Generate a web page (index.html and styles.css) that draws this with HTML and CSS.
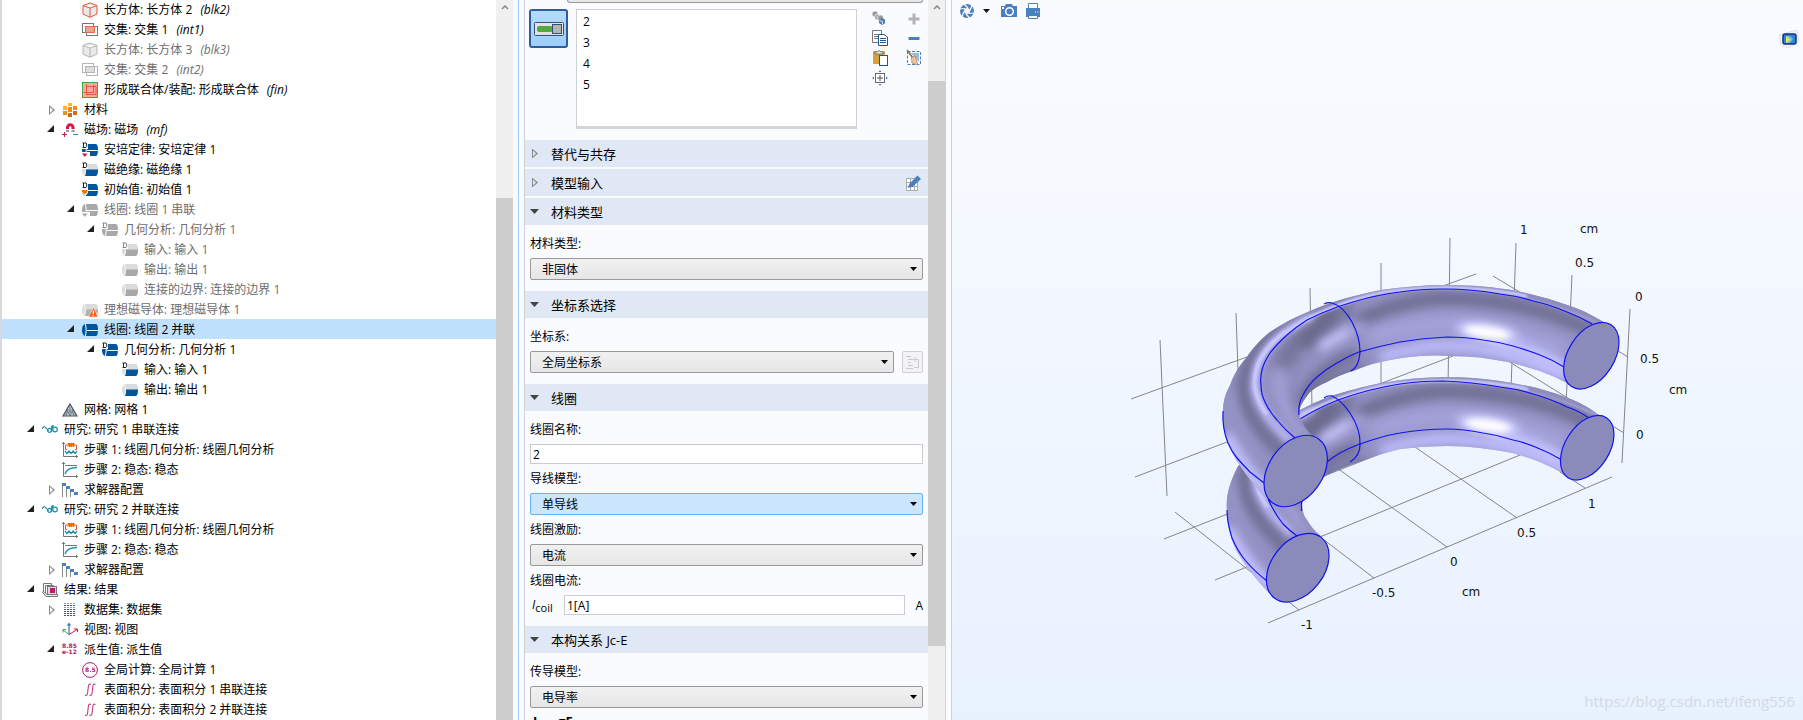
FILE: index.html
```html
<!DOCTYPE html>
<html lang="zh-CN">
<head>
  <meta charset="UTF-8">
  <title>线圈 2 并联</title>
  <link rel="stylesheet" href="styles.css">
</head>
<body>

<!-- icon definitions -->
<svg class="defs" width="0" height="0">
  <symbol id="i-cube" viewBox="0 0 16 16">
    <path d="M8 1L15 3.5V12L8 15.3L1 12V3.5Z M1 3.5L8 6L15 3.5 M8 6V15.3" fill="#e9e9e9" stroke="currentColor"/>
  </symbol>
  <symbol id="i-int" viewBox="0 0 16 16">
    <rect x=".5" y="1.500" width="11" height="9" fill="none" stroke="#777"/>
    <rect x="4.500" y="4.500" width="11" height="9" fill="none" stroke="#777"/>
    <rect x="3.500" y="4.500" width="9" height="6" fill="#f2a08f" stroke="#e2694f"/>
  </symbol>
  <symbol id="i-int-off" viewBox="0 0 16 16">
    <rect x=".5" y="1.500" width="11" height="9" fill="none" stroke="#b5b5b5"/>
    <rect x="4.500" y="4.500" width="11" height="9" fill="none" stroke="#b5b5b5"/>
    <rect x="3.500" y="4.500" width="9" height="6" fill="#ddd" stroke="#b5b5b5"/>
  </symbol>
  <symbol id="i-fin" viewBox="0 0 16 16">
    <rect x=".5" y=".5" width="15" height="15" fill="#f3a999" stroke="#4ba33f"/>
    <path d="M2 10.500H11.500V3 M4.500 2V13 M4.500 4.500H14V12.500H4.500" fill="none" stroke="#e2593f"/>
  </symbol>
  <symbol id="i-mat" viewBox="0 0 16 16">
    <path d="M6 1H10V4H6ZM1 4H5V8H1Z" fill="#ffb52e"/>
    <path d="M6 5H10V10H6ZM11 4H15V8H11ZM1 9H5V13H1Z" fill="#ef8b1d"/>
    <path d="M6 11H10V15H6ZM11 9H15V13H11Z" fill="#cc7016"/>
  </symbol>
  <symbol id="i-mag" viewBox="0 0 16 16">
    <path d="M5.500 7V5.500A2.700 2.700 0 0 1 11 5.500V7" fill="none" stroke="#d5174b" stroke-width="3"/>
    <path d="M4 8H7V10H4ZM9.500 8H12.500V10H9.500Z" fill="#999"/>
    <path d="M0 12.500H5M2.500 10V15" stroke="#d5174b"/>
    <path d="M11 12.500H16" stroke="#4a80bd"/>
  </symbol>
  <symbol id="b-full" viewBox="0 0 16 16">
    <path d="M3 2H14Q16 2.500 16 8T14 14H3Q0 13 0 8T3 2Z" fill="currentColor"/>
    <path d="M3.500 2Q5 8 3.500 14M5 8.500H16" fill="none" stroke="#fff"/>
  </symbol>
  <symbol id="b-half" viewBox="0 0 16 16">
    <path d="M3 2H14Q16 2.500 16 8T14 14H3Q0 13 0 8T3 2Z" fill="#d9dbdc"/>
    <path d="M3 14Q4.500 11 4 7.500H16Q16 13 14 14Z" fill="currentColor"/>
    <path d="M2.500 2.500Q4.500 8 2.500 13.500" fill="none" stroke="#f4f4f4"/>
  </symbol>
  <symbol id="b-d" viewBox="0 0 16 16">
    <path d="M0 0H6V7H0Z" fill="#fff"/>
    <path d="M1.500 1V5.500M.5 1H4L4.700 2V4.700L4 5.500H.5" fill="none" stroke="currentColor"/>
  </symbol>
  <symbol id="b-tri" viewBox="0 0 16 16">
    <path d="M0 10H8V16H0Z" fill="#fff"/>
    <path d="M0 11.500H5.500L2.800 15Z" fill="currentColor"/>
  </symbol>
  <symbol id="i-ampere" viewBox="0 0 16 16">
    <use href="#b-full" color="#00559b"/><use href="#b-d" color="#222"/><use href="#b-tri" color="#d0116b"/>
  </symbol>
  <symbol id="i-insul" viewBox="0 0 16 16">
    <use href="#b-half" color="#00559b"/><use href="#b-d" color="#222"/>
  </symbol>
  <symbol id="i-init" viewBox="0 0 16 16">
    <use href="#b-full" color="#00559b"/><use href="#b-d" color="#222"/>
    <path d="M0 7H6V11L3 14L0 11Z" fill="#fff"/><path d="M0 8H5.500V10L2.800 12.500L0 10Z" fill="#e37a10"/>
  </symbol>
  <symbol id="i-coil-off" viewBox="0 0 16 16">
    <use href="#b-full" color="#a8a8a8"/><use href="#b-tri" color="#a8a8a8"/>
  </symbol>
  <symbol id="i-geom-off" viewBox="0 0 16 16">
    <use href="#b-full" color="#a8a8a8"/><use href="#b-d" color="#888"/>
  </symbol>
  <symbol id="i-in-off" viewBox="0 0 16 16">
    <use href="#b-half" color="#a8a8a8"/><use href="#b-d" color="#888"/>
  </symbol>
  <symbol id="i-out-off" viewBox="0 0 16 16"><use href="#b-half" color="#a8a8a8"/></symbol>
  <symbol id="i-warn" viewBox="0 0 16 16">
    <use href="#b-half" color="#b0b0b0"/>
    <path d="M11.500 5L16 15H6.500Z" fill="#ff5a0a" stroke="#fff" stroke-width=".6"/>
    <path d="M11.300 8.500V12M11.300 12.800V14" stroke="#fff" stroke-width="1.300"/>
  </symbol>
  <symbol id="i-coil" viewBox="0 0 16 16"><use href="#b-full" color="#00559b"/></symbol>
  <symbol id="i-geom" viewBox="0 0 16 16">
    <use href="#b-full" color="#00559b"/><use href="#b-d" color="#222"/>
  </symbol>
  <symbol id="i-out" viewBox="0 0 16 16"><use href="#b-half" color="#00559b"/></symbol>
  <symbol id="i-mesh" viewBox="0 0 16 16">
    <path d="M8 2L15 14H1Z" fill="#c9d1d8" stroke="#44525f" stroke-width="1.200"/>
    <path d="M5 8H11L8 14ZM8 2V8M1 14L8 9L15 14M8 9V14M5 8L4.500 14M11 8L11.500 14" fill="none" stroke="#5a6875" stroke-width=".7"/>
  </symbol>
  <symbol id="i-study" viewBox="0 0 16 16">
    <path d="M0 7Q2 3 4 6T7 8M9.500 4V10M11 6V3" fill="none" stroke="#1c93a8" stroke-width="1.200"/>
    <circle cx="7.500" cy="8.300" r="2" fill="none" stroke="#1c93a8" stroke-width="1.200"/>
    <circle cx="13" cy="7.500" r="2.300" fill="none" stroke="#1c93a8" stroke-width="1.200"/>
    <path d="M10 3Q12 4 10.500 8" fill="none" stroke="#1c93a8"/>
  </symbol>
  <symbol id="i-step-coil" viewBox="0 0 16 16">
    <path d="M1.500 0V14.500H16M0 1.500H3M14.500 13V16" fill="none" stroke="#777"/>
    <path d="M5.500 1H12.500V4.500H5.500Z" fill="#ef7d1a"/>
    <path d="M5.500 3H3.500V7.500H5M12.500 3H14.500V7.500H13M7.500 1V5M9.500 1V5M11.500 1V5" fill="none" stroke="#e2552b"/>
    <path d="M3 9L5 11.500L7 9L9 11.500L11 9L13 11.500L15 9" fill="none" stroke="#1c93a8" stroke-width="1.300"/>
  </symbol>
  <symbol id="i-step" viewBox="0 0 16 16">
    <path d="M1.500 0V14.500H16M0 1.500H3M14.500 13V16M3 3.500H15" fill="none" stroke="#777"/>
    <path d="M3 12Q5 5.500 15 5.500" fill="none" stroke="#2496b5" stroke-width="1.300"/>
  </symbol>
  <symbol id="i-solver" viewBox="0 0 16 16">
    <path d="M.5 1V15M4.500 4V15M8.500 7V15" stroke="#888"/>
    <path d="M0 1H4V4H0ZM4 4H8V7H4ZM8 7H12V10H8ZM12 10H16V13H12Z" fill="#4a80bd"/>
  </symbol>
  <symbol id="i-results" viewBox="0 0 16 16">
    <path d="M1.500 11V1.500H9.500V3M3.500 11V3.500H11.500V5" fill="#fff" stroke="#777"/>
    <rect x="5.500" y="4.500" width="9" height="8" fill="#ddd" stroke="#777"/>
    <rect x="8" y="6" width="5" height="5" fill="#c2186b"/>
    <path d="M0 9.500L4 14.500H15.500V12.500H5L1 9" fill="#eee" stroke="#777"/>
  </symbol>
  <symbol id="i-data" viewBox="0 0 16 16">
    <path d="M2 1.500H14M2 5.500H14" stroke="#999" stroke-dasharray="2 1" />
    <path d="M2 3.500H14M2 7.500H14M2 9.500H14M2 11.500H14M2 13.500H14" stroke="#c2186b" stroke-dasharray="2 1"/>
  </symbol>
  <symbol id="i-view" viewBox="0 0 16 16">
    <path d="M7 12.500V2M5.500 3.500L7 1.500L8.500 3.500" fill="none" stroke="#4a80bd" stroke-width="1.300"/>
    <path d="M7 12.500L1 8M1 10.500V7.500H4" fill="none" stroke="#4ba33f"/>
    <path d="M7 12.500L15 7.500M12 7H15.500V10" fill="none" stroke="#d5174b"/>
  </symbol>
  <symbol id="i-derived" viewBox="0 0 16 16">
    <text x="0" y="6" class="icon-num">8.85</text>
    <text x="0" y="12" class="icon-num">e-12</text>
  </symbol>
  <symbol id="i-global" viewBox="0 0 16 16">
    <circle cx="8" cy="8" r="7.400" fill="#fff" stroke="#b5176b"/>
    <text x="3" y="10" class="icon-num">8.5</text>
  </symbol>
  <symbol id="i-surf" viewBox="0 0 16 16">
    <path d="M3 13Q5.500 14.500 5.700 10L6.300 5Q6.500 1 9 2.500M7.500 13Q10 14.500 10.200 10L10.800 5Q11 1 13.500 2.500" fill="none" stroke="#c2387c" stroke-width="1.100"/>
  </symbol>
</svg>

<div class="app">

  <!-- model tree -->
  <div class="tree-pane">
    <ul class="tree">
      <li class="row d2"><span class="arrow"></span><svg class="ico red"><use href="#i-cube"/></svg><span>长方体: 长方体 2 <i>(blk2)</i></span></li>
      <li class="row d2"><span class="arrow"></span><svg class="ico"><use href="#i-int"/></svg><span>交集: 交集 1 <i>(int1)</i></span></li>
      <li class="row d2 off"><span class="arrow"></span><svg class="ico gray"><use href="#i-cube"/></svg><span>长方体: 长方体 3 <i>(blk3)</i></span></li>
      <li class="row d2 off"><span class="arrow"></span><svg class="ico"><use href="#i-int-off"/></svg><span>交集: 交集 2 <i>(int2)</i></span></li>
      <li class="row d2"><span class="arrow"></span><svg class="ico"><use href="#i-fin"/></svg><span>形成联合体/装配: 形成联合体 <i>(fin)</i></span></li>
      <li class="row d1"><span class="arrow closed"></span><svg class="ico"><use href="#i-mat"/></svg><span>材料</span></li>
      <li class="row d1"><span class="arrow open"></span><svg class="ico"><use href="#i-mag"/></svg><span>磁场: 磁场 <i>(mf)</i></span></li>
      <li class="row d2"><span class="arrow"></span><svg class="ico"><use href="#i-ampere"/></svg><span>安培定律: 安培定律 1</span></li>
      <li class="row d2"><span class="arrow"></span><svg class="ico"><use href="#i-insul"/></svg><span>磁绝缘: 磁绝缘 1</span></li>
      <li class="row d2"><span class="arrow"></span><svg class="ico"><use href="#i-init"/></svg><span>初始值: 初始值 1</span></li>
      <li class="row d2 off"><span class="arrow open"></span><svg class="ico"><use href="#i-coil-off"/></svg><span>线圈: 线圈 1 串联</span></li>
      <li class="row d3 off"><span class="arrow open"></span><svg class="ico"><use href="#i-geom-off"/></svg><span>几何分析: 几何分析 1</span></li>
      <li class="row d4 off"><span class="arrow"></span><svg class="ico"><use href="#i-in-off"/></svg><span>输入: 输入 1</span></li>
      <li class="row d4 off"><span class="arrow"></span><svg class="ico"><use href="#i-out-off"/></svg><span>输出: 输出 1</span></li>
      <li class="row d4 off"><span class="arrow"></span><svg class="ico"><use href="#i-out-off"/></svg><span>连接的边界: 连接的边界 1</span></li>
      <li class="row d2 off"><span class="arrow"></span><svg class="ico"><use href="#i-warn"/></svg><span>理想磁导体: 理想磁导体 1</span></li>
      <li class="row d2 selected"><span class="arrow open"></span><svg class="ico"><use href="#i-coil"/></svg><span>线圈: 线圈 2 并联</span></li>
      <li class="row d3"><span class="arrow open"></span><svg class="ico"><use href="#i-geom"/></svg><span>几何分析: 几何分析 1</span></li>
      <li class="row d4"><span class="arrow"></span><svg class="ico"><use href="#i-insul"/></svg><span>输入: 输入 1</span></li>
      <li class="row d4"><span class="arrow"></span><svg class="ico"><use href="#i-out"/></svg><span>输出: 输出 1</span></li>
      <li class="row d1"><span class="arrow"></span><svg class="ico"><use href="#i-mesh"/></svg><span>网格: 网格 1</span></li>
      <li class="row d0"><span class="arrow open"></span><svg class="ico"><use href="#i-study"/></svg><span>研究: 研究 1 串联连接</span></li>
      <li class="row d1"><span class="arrow"></span><svg class="ico"><use href="#i-step-coil"/></svg><span>步骤 1: 线圈几何分析: 线圈几何分析</span></li>
      <li class="row d1"><span class="arrow"></span><svg class="ico"><use href="#i-step"/></svg><span>步骤 2: 稳态: 稳态</span></li>
      <li class="row d1"><span class="arrow closed"></span><svg class="ico"><use href="#i-solver"/></svg><span>求解器配置</span></li>
      <li class="row d0"><span class="arrow open"></span><svg class="ico"><use href="#i-study"/></svg><span>研究: 研究 2 并联连接</span></li>
      <li class="row d1"><span class="arrow"></span><svg class="ico"><use href="#i-step-coil"/></svg><span>步骤 1: 线圈几何分析: 线圈几何分析</span></li>
      <li class="row d1"><span class="arrow"></span><svg class="ico"><use href="#i-step"/></svg><span>步骤 2: 稳态: 稳态</span></li>
      <li class="row d1"><span class="arrow closed"></span><svg class="ico"><use href="#i-solver"/></svg><span>求解器配置</span></li>
      <li class="row d0"><span class="arrow open"></span><svg class="ico"><use href="#i-results"/></svg><span>结果: 结果</span></li>
      <li class="row d1"><span class="arrow closed"></span><svg class="ico"><use href="#i-data"/></svg><span>数据集: 数据集</span></li>
      <li class="row d1"><span class="arrow"></span><svg class="ico"><use href="#i-view"/></svg><span>视图: 视图</span></li>
      <li class="row d1"><span class="arrow open"></span><svg class="ico"><use href="#i-derived"/></svg><span>派生值: 派生值</span></li>
      <li class="row d2"><span class="arrow"></span><svg class="ico"><use href="#i-global"/></svg><span>全局计算: 全局计算 1</span></li>
      <li class="row d2"><span class="arrow"></span><svg class="ico"><use href="#i-surf"/></svg><span>表面积分: 表面积分 1 串联连接</span></li>
      <li class="row d2"><span class="arrow"></span><svg class="ico"><use href="#i-surf"/></svg><span>表面积分: 表面积分 2 并联连接</span></li>
    </ul>
    <div class="scrollbar">
      <svg class="chevron" viewBox="0 0 8 5"><path d="M1 4L4 1L7 4" fill="none" stroke="#888" stroke-width="1.500"/></svg>
      <div class="thumb tree-thumb"></div>
    </div>
  </div>

  <!-- settings -->
  <div class="settings-pane">
    <div class="settings">
      <div class="cut-field"></div>
      <div class="selection">
        <button class="toggle" type="button" aria-label="激活选择">
          <svg width="30" height="14" viewBox="0 0 30 14">
            <rect x=".5" y=".5" width="29" height="13" rx="1" fill="#e3e3e3" stroke="#34507c"/>
            <rect x="3" y="4" width="16" height="6" rx="2" fill="#52a843"/>
            <rect x="18.500" y="2.500" width="9" height="9" fill="#b4b4b4" stroke="#34507c"/>
          </svg>
        </button>
        <ul class="domain-list">
          <li>2</li>
          <li>3</li>
          <li>4</li>
          <li>5</li>
        </ul>
        <div class="tools">
          <button type="button" aria-label="创建选择"><svg viewBox="0 0 18 18">
            <g stroke="#fff" stroke-width=".6"><circle cx="4" cy="5" r="3" fill="#999"/><circle cx="6.500" cy="8" r="3" fill="#aaa"/><circle cx="9.500" cy="9" r="3" fill="#999"/></g>
            <path d="M8 11L11 9L14 10.500V14.500L11 16L8 14Z" fill="#4a80bd"/><path d="M8.500 11.500L11.500 12.500V15" fill="none" stroke="#cfe2f5"/></svg></button>
          <button type="button" aria-label="添加"><svg viewBox="0 0 18 18"><path d="M3.500 10H14.500M9 4.500V15.500" stroke="#b3b3b3" stroke-width="3"/></svg></button>
          <button type="button" aria-label="复制"><svg viewBox="0 0 18 18">
            <path d="M1.500 1.500H10.500V13.500H1.500Z" fill="#fff" stroke="#777"/><path d="M3 5.500H7M3 7.500H7M3 9.500H7" stroke="#777"/>
            <path d="M7.500 5.500H13L16.500 8V16.500H7.500Z" fill="#fff" stroke="#27548a"/><path d="M9 9.500H15M9 11.500H15M9 13.500H15" stroke="#27548a"/></svg></button>
          <button type="button" aria-label="移除"><svg viewBox="0 0 18 18"><path d="M3.500 9.500H14.500" stroke="#4a80bd" stroke-width="3"/></svg></button>
          <button type="button" aria-label="粘贴"><svg viewBox="0 0 18 18">
            <rect x="2" y="2" width="12" height="13" rx="1" fill="#d4a13b"/><path d="M4 3H6Q8 0 10 3H12V5H4Z" fill="#eee" stroke="#777"/>
            <rect x="8.500" y="6.500" width="8" height="10" fill="#fff" stroke="#27548a"/></svg></button>
          <button type="button" aria-label="清除选择"><svg viewBox="0 0 18 18">
            <rect x="2.500" y="2.500" width="13" height="13" fill="none" stroke="#4a80bd" stroke-dasharray="3 1.500"/><path d="M6 4H14V13Z" fill="#9dbcdc"/>
            <path d="M2 1L8 9" stroke="#8a6a4c" stroke-width="1.500"/><path d="M6.500 8.500L10 7L13 16L7 14Z" fill="#ecc7a5" stroke="#a97c55" stroke-width=".7"/></svg></button>
          <button type="button" aria-label="缩放到选择"><svg viewBox="0 0 18 18">
            <rect x="4.500" y="4.500" width="9" height="9" fill="#fff" stroke="#666"/><path d="M6 9H12M9 6V12" stroke="#555"/>
            <path d="M7.500 3H10.500L9 1ZM7.500 15H10.500L9 17ZM3 7.500V10.500L1 9ZM15 7.500V10.500L17 9Z" fill="#4a80bd"/></svg></button>
        </div>
      </div>

      <h3 class="section-head"><span class="caret right"></span>替代与共存</h3>
      <h3 class="section-head"><span class="caret right"></span>模型输入
        <svg class="edit-ico" viewBox="0 0 18 18">
          <path d="M2.500 4.500H13.500V16.500H2.500ZM2.500 8.500H13.500M2.500 12.500H13.500M6.500 4.500V16.500M10.500 4.500V16.500" fill="#fff" stroke="#aaa"/>
          <path d="M4 14L5.500 9.500L13.500 1.500L17 5L9 12.500Z" fill="#4a80bd"/></svg>
      </h3>
      <h3 class="section-head"><span class="caret down"></span>材料类型</h3>
      <div class="section-body">
        <label for="matType">材料类型:</label>
        <div class="combo"><select id="matType"><option>非固体</option></select></div>
      </div>

      <h3 class="section-head"><span class="caret down"></span>坐标系选择</h3>
      <div class="section-body">
        <label for="coord">坐标系:</label>
        <div class="line">
          <div class="combo"><select id="coord"><option>全局坐标系</option></select></div>
          <button class="goto" type="button" disabled aria-label="转到源">
            <svg width="15" height="15" viewBox="0 0 15 15"><path d="M1 1.500H6M3 4.500H8M3 7.500H6M3 10.500H8M1 13.500H8M9 4.500H13.500V12.500H9M11 2L8.500 4.500L11 7" fill="none" stroke="#c9c9cb"/></svg>
          </button>
        </div>
      </div>

      <h3 class="section-head"><span class="caret down"></span>线圈</h3>
      <div class="section-body">
        <label for="coilName">线圈名称:</label>
        <input id="coilName" type="text" value="2">
        <label for="wire">导线模型:</label>
        <div class="combo active"><select id="wire"><option>单导线</option></select></div>
        <label for="excite">线圈激励:</label>
        <div class="combo"><select id="excite"><option>电流</option></select></div>
        <label for="current">线圈电流:</label>
        <div class="line current-line">
          <span class="symbol"><i>I</i><sub>coil</sub></span>
          <input id="current" type="text" value="1[A]">
          <span class="unit">A</span>
        </div>
      </div>

      <h3 class="section-head"><span class="caret down"></span>本构关系 Jc-E</h3>
      <div class="section-body">
        <label for="cond">传导模型:</label>
        <div class="combo"><select id="cond"><option>电导率</option></select></div>
        <div class="equation">J<sub>c</sub> = σE</div>
      </div>
    </div>
    <div class="scrollbar settings-bar">
      <svg class="chevron" viewBox="0 0 8 5"><path d="M1 4L4 1L7 4" fill="none" stroke="#888" stroke-width="1.500"/></svg>
      <div class="thumb settings-thumb"></div>
    </div>
  </div>

  <!-- graphics window -->
  <div class="graphics">
    <div class="toolbar">
      <button type="button" aria-label="场景光"><svg width="16" height="16" viewBox="0 0 16 16">
        <circle cx="8" cy="8" r="5" fill="none" stroke="#4a80bd" stroke-width="4"/>
        <path d="M5 1L9 5M13 2.500L11 7.500M15.500 10L10 10.500M11 15.500L7 11M3 13.500L5 8.500M.5 6L6 5.500" stroke="#fafbff" stroke-width="1.200"/></svg></button>
      <button class="more" type="button" aria-label="更多"><span class="drop"></span></button>
      <button type="button" aria-label="快照"><svg width="16" height="16" viewBox="0 0 16 16">
        <path d="M0 3H4L5 1H11L12 3H16V14H0Z" fill="#4a80bd"/><circle cx="8.500" cy="8.500" r="3.800" fill="#4a80bd" stroke="#fff" stroke-width="1.500"/><path d="M1 4H3V6H1Z" fill="#fff"/></svg></button>
      <button type="button" aria-label="打印"><svg width="16" height="16" viewBox="0 0 16 16">
        <path d="M3.500 6V.5H12.500V6" fill="#fff" stroke="#4a80bd"/><path d="M1 5H15V14H1Z" fill="#4a80bd"/><path d="M3.500 12.500H12.500V15.500H3.500Z" fill="#fff" stroke="#4a80bd"/><path d="M10 9H11M12.500 9H13.500" stroke="#fff"/></svg></button>
    </div>
    <svg class="logo" viewBox="0 0 22 20">
      <path d="M1 6L19 1L21 13L10 19L3 16Z" fill="#f4f3f1" stroke="#e2e2e2"/>
      <rect x="5" y="5" width="13" height="10" rx="2" fill="#2f86d6" stroke="#10328f" stroke-width="1.500"/>
      <path d="M8 7H12L15 10L12 14H8Z" fill="#6fc3d8"/>
      <path d="M8 7.500L12.500 10.500L8 14Z" fill="#ffe24a"/>
    </svg>

    <svg class="scene" viewBox="952 20 851 700" preserveAspectRatio="xMidYMid meet">
      <defs>
        <filter id="b1" filterUnits="userSpaceOnUse" x="1180" y="240" width="480" height="420"><feGaussianBlur stdDeviation="1.200"/></filter>
        <filter id="b3" filterUnits="userSpaceOnUse" x="1180" y="240" width="480" height="420"><feGaussianBlur stdDeviation="3"/></filter>
        <filter id="b5" filterUnits="userSpaceOnUse" x="1180" y="240" width="480" height="420"><feGaussianBlur stdDeviation="5"/></filter>
        <filter id="b7" filterUnits="userSpaceOnUse" x="1180" y="240" width="480" height="420"><feGaussianBlur stdDeviation="7"/></filter>
        <clipPath id="topRing">
          <path d="M1605 323C1590 314 1580 309 1570 306Q1545 297 1517 291C1495 287 1470 285 1447 285C1424 285 1402 287 1381 290C1355 295 1330 302 1310 311C1295 317 1282 324 1270 332C1259 341 1252 349 1247 357C1237 368 1233 377 1230 385C1224 396 1223 404 1223 413V421C1224 429 1226 436 1228 444C1236 463 1251 482 1268 500L1296 472L1320 441Q1312 437 1307 430Q1301 423 1299 414C1299 407 1304 399 1310 392Q1317 386 1327 382Q1339 375 1353 371C1363 367 1371 364 1381 362C1393 359 1407 357 1420 356Q1436 355 1450 356Q1465 356 1480 357.500Q1497 360 1513 363Q1527 367 1540 371Q1554 376 1567 383L1592 356Z"/>
        </clipPath>
        <clipPath id="bottomRing">
          <path d="M1600 416C1590 408 1582 404 1573 400Q1556 393 1537 388Q1519 384 1500 381Q1473 377 1447 377Q1414 377 1381 383C1362 387 1347 391 1331 396Q1315 402 1300 410L1238 466Q1231 479 1228 492Q1226 501 1227 511Q1227 523 1230 533Q1232 541 1235 548C1243 563 1255 578 1269 593L1298 568L1321 536Q1312 529 1307 520Q1302 514 1302 504Q1308 486 1327 475Q1339 469 1350 465L1367 459Q1384 453 1400 449Q1424 446 1447 446Q1464 446 1480 448Q1497 450 1513 453Q1527 457 1540 462Q1552 467 1564 474L1587 448Z"/>
        </clipPath>
        <!-- light and dark streaks of a ring surface -->
        <g id="shade" fill="none" stroke-linecap="round">
          <path d="M1200 260H1640V640H1200Z" fill="#9391c3"/>
          <path d="M1375 336Q1410 324 1450 324T1560 348" stroke="#a5a3dc" stroke-width="18" filter="url(#b7)"/>
          <path d="M1364 318Q1400 301 1443 298Q1495 299 1533 309T1596 334" stroke="#716f94" stroke-width="14" filter="url(#b5)"/>
          <path d="M1345 310Q1300 328 1284 362" stroke="#75739a" stroke-width="20" filter="url(#b7)"/>
          <path d="M1330 316L1306 340" stroke="#6c6a8e" stroke-width="16" filter="url(#b5)"/>
          <path d="M1352 356Q1318 370 1300 400" stroke="#747299" stroke-width="14" filter="url(#b5)"/>
          <path d="M1323 346L1348 331" stroke="#cbc9ff" stroke-width="8" filter="url(#b5)"/>
          <path d="M1365 325L1350 331" stroke="#a5a3d8" stroke-width="6" filter="url(#b5)"/>
          <path d="M1385 357Q1420 345 1450 346Q1505 348 1566 376" stroke="#bbb9fa" stroke-width="13" filter="url(#b5)"/>
          <path d="M1495 341Q1530 349 1560 366" stroke="#c5c3ff" stroke-width="14" filter="url(#b5)"/>
          <path d="M1310 394Q1350 368 1450 358Q1510 360 1567 385" stroke="#8b89b8" stroke-width="3" filter="url(#b1)"/>
          <path d="M1300 402Q1318 384 1362 370" stroke="#706e95" stroke-width="10" filter="url(#b5)"/>
          <ellipse cx="1487" cy="332" rx="32" ry="9" transform="rotate(8 1487 332)" fill="#cfceff" filter="url(#b5)"/>
          <ellipse cx="1487" cy="332.500" rx="23" ry="6" transform="rotate(8 1487 332.500)" fill="#fff" filter="url(#b3)"/>
          <path d="M1280 375Q1276 400 1302 432" stroke="#a09ed3" stroke-width="12" filter="url(#b5)"/>
          <path d="M1300 372Q1286 398 1310 432" stroke="#8c8abb" stroke-width="7" filter="url(#b5)"/>
          <path d="M1290 319Q1238 356 1244 398Q1252 425 1280 450L1292 470" stroke="#716f96" stroke-width="14" filter="url(#b5)"/>
          <path d="M1229 398Q1226 425 1252 458" stroke="#9593c6" stroke-width="12" filter="url(#b5)"/>
          <path d="M1228 440Q1246 474 1272 496" stroke="#c3c1ff" stroke-width="13" filter="url(#b5)"/>
          <path d="M1310 317C1262 341 1254 366 1255 387C1258 407 1271 422 1288 438" stroke="#b9b7f2" stroke-width="8" filter="url(#b3)"/>
          <path d="M1285 332C1260 351 1253 370 1255 388C1257 398 1261 406 1266 413" stroke="#cbc9ff" stroke-width="4" filter="url(#b1)"/>
          <path d="M1285 333Q1320 307 1381 292.500Q1414 287 1447 287Q1482 288 1517 294Q1560 303 1600 322" stroke="#c9c7fa" stroke-width="4" filter="url(#b1)"/>
          <path d="M1270 331Q1320 303 1381 289.500Q1414 284.500 1447 284.500Q1482 285 1517 290.500Q1560 300 1605 322" stroke="#8c8ab8" stroke-width="2" filter="url(#b1)"/>
          <path d="M1530 296Q1570 306 1603 322" stroke="#8e8cbd" stroke-width="6" filter="url(#b1)"/>
        </g>
      </defs>

      <g class="grid-lines">
        <path d="M1160 340L1167 496M1236 313L1239 400M1310 288L1312 410M1381 263V390M1450 238L1448 390M1516 243L1511 390M1572 275L1566 405M1630 309L1622 463"/>
        <path d="M1131 399L1476 274M1493 276L1628 357M1135 477L1453 356M1500 356L1624 433M1164 539L1390 450"/>
        <path d="M1175 512L1299 610M1215 580L1520 455M1268 623L1612 477M1374 578L1315 533M1447 547L1330 463M1517 518L1405 440M1585 488L1560 472"/>
      </g>

      <g clip-path="url(#bottomRing)"><use href="#shade" transform="translate(1 93)"/></g>
      <g class="edges">
        <path d="M1589 418C1580 412 1574 409 1567 407Q1551 399 1533 394Q1517 389 1500 387Q1472 382 1443 381Q1420 381 1400 384Q1368 389 1338 400Q1318 408 1300 419"/>
        <path d="M1266 493Q1268 500 1272 507Q1276 515 1283 524Q1289 530 1297 536"/>
        <path d="M1560 459Q1550 453 1540 449Q1527 443 1513 440Q1498 435 1483 433Q1463 429 1447 429Q1424 429 1400 433Q1386 435 1372 440L1360 444Q1349 448 1340 453Q1333 457 1327 462M1301.500 502V511"/>
        <path d="M1227 510Q1227 522 1232 538Q1237 550 1245 560Q1254 571 1267 581"/>
        <path d="M1324 398Q1328 395 1332 396Q1341 400 1350 413Q1361 430 1360 445Q1360 456 1350 462"/>
      </g>
      <g clip-path="url(#topRing)"><use href="#shade"/></g>
      <g class="edges">
        <path d="M1592 324Q1580 317 1567 312Q1551 305 1533 301Q1517 296 1500 294Q1472 289 1443 289Q1420 289 1400 292Q1376 295 1353 302L1337 307Q1321 313 1307 320Q1296 327 1287 335Q1276 345 1270 353Q1264 362 1262 370Q1260 378 1261 385Q1261 394 1265 402Q1269 411 1277 420Q1285 430 1295 438"/>
        <path d="M1564 367Q1553 360 1540 355Q1527 350 1513 346Q1499 342 1483 340Q1466 337 1447 337Q1423 338 1400 342Q1380 346 1359 352Q1348 356 1337 363Q1326 369 1317 377Q1308 385 1303 395Q1298 403 1299 415"/>
        <path d="M1223 411Q1222 428 1228 443Q1232 452 1237 458Q1244 466 1250 472L1264 483"/>
        <path d="M1324 304Q1328 302 1332 303Q1343 306 1352 322Q1360 337 1360 352Q1359 367 1351 371"/>
        <ellipse class="cap" cx="1297.700" cy="567.700" rx="38.300" ry="26.200" transform="rotate(-52.300 1297.700 567.700)"/>
        <ellipse class="cap" cx="1295.700" cy="471" rx="39.400" ry="26.900" transform="rotate(-54.400 1295.700 471)"/>
        <ellipse class="cap" cx="1587.200" cy="447.700" rx="35.600" ry="22.100" transform="rotate(-57.300 1587.200 447.700)"/>
        <ellipse class="cap" cx="1591.300" cy="355.700" rx="36.700" ry="23" transform="rotate(-57.400 1591.300 355.700)"/>
      </g>

      <g class="axis-text">
        <text x="1520" y="234">1</text>
        <text x="1580" y="233">cm</text>
        <text x="1575" y="267">0.5</text>
        <text x="1635" y="301">0</text>
        <text x="1640" y="363">0.5</text>
        <text x="1669" y="394">cm</text>
        <text x="1636" y="439">0</text>
        <text x="1588" y="508">1</text>
        <text x="1517" y="537">0.5</text>
        <text x="1450" y="566">0</text>
        <text x="1462" y="596">cm</text>
        <text x="1372" y="597">-0.5</text>
        <text x="1301" y="629">-1</text>
      </g>
    </svg>
    <div class="watermark">https://blog.csdn.net/ifeng556</div>
  </div>

</div>

</body>
</html>
```
FILE: styles.css
```css
* {
  box-sizing: border-box;
}

body {
  margin: 0;
  font-family: "Open Sans", "Noto Sans CJK SC", sans-serif;
  font-size: 12px;
  color: #000;
  background: #fafbff;
}

.defs {
  display: none;
}

.app {
  display: grid;
  grid-template-columns: 519px 433px 1fr;
  height: 100vh;
  overflow: hidden;
}

button {
  padding: 0;
  border: 0;
  background: none;
}

/* tree */
.tree-pane {
  display: flex;
  min-height: 0;
  padding-right: 5px;
  border-left: 2px solid #d8d8e0;
  border-right: 1px solid #99cdfb;
  overflow: hidden;
}

.tree {
  flex: 1;
  margin: -1px 0 0;
  padding: 0;
  list-style: none;
  background: #fff;
}

.row {
  display: flex;
  align-items: center;
  height: 20px;
  padding-top: 2px;
  line-height: 18px;
  white-space: nowrap;
}

.row i {
  margin-left: 5px;
}

.d0 { padding-left: 25px; }
.d1 { padding-left: 45px; }
.d2 { padding-left: 65px; }
.d3 { padding-left: 85px; }
.d4 { padding-left: 105px; }

.off {
  color: #6d6d6d;
}

.selected {
  background: #bfe1fe;
}

.arrow {
  width: 15px;
  height: 10px;
}

.arrow.open::before {
  content: "";
  display: block;
  width: 7px;
  height: 7px;
  background: #222;
  clip-path: polygon(100% 0, 100% 100%, 0 100%);
}

.arrow.closed::before,
.caret.right::before {
  content: "";
  display: block;
  width: 6px;
  height: 10px;
  margin-left: 2px;
  background: #888;
  clip-path: polygon(0 0, 100% 50%, 0 100%, 0 0, 1px 2px, 1px 8px, 4px 50%, 1px 2px);
}

.ico {
  width: 16px;
  height: 16px;
  margin-right: 6px;
}

.red { color: #e2593f; }
.gray { color: #b5b5b5; }

.icon-num {
  font: bold 6px "DejaVu Sans", sans-serif;
  fill: #b5176b;
}

/* scrollbars */
.scrollbar {
  flex: 0 0 17px;
  display: flex;
  flex-direction: column;
  align-items: center;
  background: #f0f0f0;
}

.chevron {
  width: 8px;
  height: 5px;
  margin-top: 5px;
}

.thumb {
  width: 100%;
  background: #cdcdcd;
}

.tree-thumb {
  flex: 1;
  margin-top: 188px;
}

/* settings */
.settings-pane {
  display: flex;
  min-height: 0;
  padding: 0 5px;
  border-right: 1px solid #cfcfd4;
  overflow: hidden;
}

.settings {
  flex: 1;
  border-left: 1px solid #d0d0d6;
}

.settings-bar {
  flex-basis: 18px;
  border-right: 1px solid #cfcfd4;
}

.settings-thumb {
  height: 565px;
  margin-top: 71px;
}

.cut-field {
  height: 3px;
  margin: 0 5px 6px 42px;
  border: 1px solid #999;
  border-top: 0;
  border-radius: 0 0 3px 3px;
  background: #e8e8e8;
}

.selection {
  display: flex;
  align-items: flex-start;
  padding: 0 5px 11px 4px;
}

.toggle {
  display: flex;
  align-items: center;
  justify-content: center;
  width: 39px;
  height: 39px;
  margin-right: 8px;
  border: 2px solid #2f5c9c;
  border-radius: 3px;
  background: linear-gradient(#b5dafa, #9ccffa);
}

.domain-list {
  flex: 1;
  height: 120px;
  margin: 0;
  padding: 1px 6px;
  list-style: none;
  line-height: 21px;
  border: 1px solid #d0d0d0;
  border-bottom: 3px solid #d5d5d5;
  background: #fff;
}

.tools {
  display: grid;
  grid-template-columns: 18px 18px;
  column-gap: 16px;
  row-gap: 2px;
  margin-left: 14px;
}

.tools button,
.tools svg {
  display: block;
  width: 18px;
  height: 18px;
}

.section-head {
  display: flex;
  align-items: center;
  height: 27px;
  margin: 0 0 2px;
  padding-left: 5px;
  font-size: 13px;
  font-weight: normal;
  line-height: 20px;
  background: #dfe8f4;
}

.edit-ico {
  width: 18px;
  height: 18px;
  margin-left: auto;
  margin-right: 6px;
}

.caret {
  width: 21px;
}

.caret.down::before,
.drop {
  content: "";
  display: block;
  width: 9px;
  height: 5px;
  background: #444;
  clip-path: polygon(0 0, 100% 0, 50% 100%);
}

.section-body {
  padding: 8px 5px 11px;
}

.section-body label {
  display: block;
  margin-bottom: 5px;
  line-height: 18px;
}

.section-body label:not(:first-child) {
  margin-top: 6px;
}

.combo {
  position: relative;
  flex: 1;
}

.combo::after {
  content: "";
  position: absolute;
  top: 9px;
  right: 6px;
  width: 7px;
  height: 4px;
  background: #000;
  clip-path: polygon(0 0, 100% 0, 50% 100%);
  pointer-events: none;
}

.combo select {
  display: block;
  width: 100%;
  height: 22px;
  padding: 0 11px;
  font: inherit;
  color: #000;
  appearance: none;
  border: 1px solid #999;
  border-radius: 2px;
  background: linear-gradient(#f1f1f2, #e6e6e6);
}

.combo.active select {
  border-color: #66b4f2;
  background: #cbe6fc;
}

.section-body input {
  display: block;
  width: 100%;
  height: 20px;
  padding: 0 2px;
  font: inherit;
  border: 1px solid #ccc;
  background: #fff;
}

.line {
  display: flex;
  align-items: center;
  gap: 8px;
}

.goto {
  display: flex;
  align-items: center;
  justify-content: center;
  width: 21px;
  height: 22px;
  border: 1px solid #d0d0d2;
  border-radius: 2px;
  background: #f3f3f5;
}

.symbol {
  flex: 0 0 26px;
  padding-left: 2px;
  line-height: 18px;
}

.symbol sub {
  font-size: 11px;
  line-height: 0;
}

.section-body .current-line input {
  flex: 1;
  width: auto;
}

.unit {
  margin-left: 2px;
}

.equation {
  margin-top: 4px;
  padding-left: 3px;
  font-size: 13px;
  font-weight: bold;
}

/* graphics */
.graphics {
  position: relative;
  display: flex;
  flex-direction: column;
  min-height: 0;
  background: linear-gradient(#fafbff, #f4f8ff 35%, #eef5ff 65%, #e8f1fe);
}

.toolbar {
  display: flex;
  align-items: center;
  gap: 8px;
  height: 20px;
  padding: 2px 7px 0;
}

.toolbar svg {
  display: block;
}

.more {
  margin-right: 3px;
}

.drop {
  width: 7px;
  height: 4px;
  background: #111;
}

.logo {
  position: absolute;
  top: 29px;
  right: 3px;
  width: 22px;
  height: 20px;
}

.scene {
  flex: 1;
  width: 100%;
  min-height: 0;
}

.grid-lines {
  fill: none;
  stroke: #858585;
}

.edges {
  fill: none;
  stroke: #1212f0;
  stroke-width: 1.2;
}

.cap {
  fill: #8b8bbb;
}

.axis-text {
  font: 12px "DejaVu Sans", sans-serif;
  fill: #111;
}

.watermark {
  position: absolute;
  right: 8px;
  bottom: 9px;
  font-size: 15px;
  line-height: 20px;
  color: #d3d9e2;
}
```
